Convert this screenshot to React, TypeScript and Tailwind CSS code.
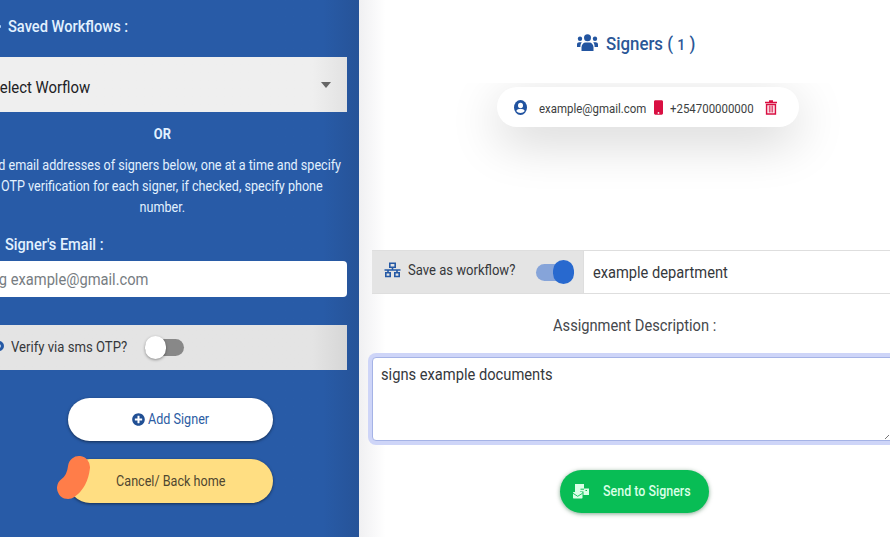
import React from "react";
import { FaMobile, FaPlusCircle } from "react-icons/fa";

function GroupIcon() {
  return (
    <svg width="21" height="17" viewBox="0 0 21 17" fill="#2355a0">
      <circle cx="10.500" cy="3.800" r="3.500" />
      <circle cx="3" cy="4.800" r="2.200" />
      <circle cx="18" cy="4.800" r="2.200" />
      <path d="M4.500 17v-3.500c0-3 2-5 4-5h4c2 0 4 2 4 5V17z" />
      <path d="M0 13v-2.500C0 9 1 8.300 2.300 8.300h2.500C3.800 9.500 3.400 11 3.400 13zM21 13v-2.500c0-1.500-1-2.200-2.300-2.200h-2.500c1 1.200 1.400 2.700 1.400 4.700z" />
    </svg>
  );
}

function AccountIcon() {
  return (
    <svg width="13" height="15" viewBox="0 0 26 30">
      <ellipse cx="13" cy="15" rx="13" ry="15" fill="#2153a0" />
      <ellipse cx="13" cy="11" rx="5" ry="5.500" fill="#fff" />
      <path d="M4.500 22C6 18.500 9 18 13 18s7 .500 8.500 4C19.500 24.500 16.500 26 13 26s-6.500-1.500-8.500-4z" fill="#fff" />
    </svg>
  );
}

function NetworkIcon() {
  return (
    <svg width="17" height="16" viewBox="0 0 17 16" fill="none" stroke="#2559a5" strokeWidth="1.600">
      <path d="M5.800 1.300h5.400v4H5.800zM1.800 10.700h4.400v3.800H1.800zM10.800 10.700h4.400v3.800h-4.400zM8.500 5.300V8M0.500 8h16M4 8v2.700M13 8v2.700" />
    </svg>
  );
}

function TrashIcon() {
  return (
    <svg width="12" height="15" viewBox="0 0 12 15" fill="none" stroke="#d90f42">
      <path d="M0 2.500h12M4 1h4" strokeWidth="1.700" />
      <path d="M1.600 4.500v9.600h8.800V4.500z" strokeWidth="1.500" />
      <path d="M4.300 5.500v7M6 5.500v7M7.700 5.500v7" strokeWidth="0.900" />
    </svg>
  );
}

function MailStackIcon() {
  return (
    <svg width="16" height="15" viewBox="0 0 16 15">
      <path d="M2 0h9v5H7v3H2z" fill="#d9ffe6" />
      <path d="M7 4.500h9v6.500h-5.500V7.500H7z" fill="#d9ffe6" />
      <path d="M7.500 5.200h3.500M12.500 6.500h1.500" stroke="#08bd55" />
      <rect y="8" width="9.500" height="6.500" rx="0.700" fill="#d9ffe6" />
      <path d="M0 9.300l4.700 3L9.500 9.300" stroke="#08bd55" fill="none" strokeWidth="0.900" />
    </svg>
  );
}

function SavedWorkflows() {
  return (
    <>
      <div className="flex h-[57px] items-center pb-1">
        <span className="-ml-px mr-[7px] h-[3px] w-[2px] rounded-full bg-[#a9cdf5]" />
        <span className="origin-left scale-x-[0.915] text-[16px] font-medium text-[#e2f1ff]">Saved Workflows :</span>
      </div>
      <div className="mr-[12.5px] flex h-[55px] items-center justify-between bg-gradient-to-r from-[#efefef] from-90% to-[#e2e2e2] pr-[15.5px] pt-[6px]">
        <span className="-ml-[9px] origin-left scale-x-[0.93] text-[16px] text-[#202124]">Select Worflow</span>
        <span className="mb-[5px] h-0 w-0 border-x-[5.5px] border-t-[6px] border-x-transparent border-t-[#666]" />
      </div>
    </>
  );
}

function SignerForm() {
  return (
    <>
      <p className="ml-[-22px] mr-3 h-[43px] pt-[10px] text-center text-[14px] font-bold leading-[24px] text-[#e2f1ff]">
        <span className="inline-block scale-x-[0.92]">OR</span>
      </p>
      <p className="ml-[-63px] mr-[-28px] h-[76px] text-center text-[14px] leading-[21px] text-[#e2f1ff]">
        <span className="inline-block scale-x-[0.9] whitespace-nowrap">Add email addresses of signers below, one at a time and specify</span>
        <br />
        <span className="inline-block scale-x-[0.9] whitespace-nowrap">OTP verification for each signer, if checked, specify phone</span>
        <br />
        <span className="inline-block scale-x-[0.9]">number.</span>
      </p>
      <div className="flex h-[30px] items-center pb-0.5 pl-[5px]">
        <span className="origin-left scale-x-[0.91] text-[16px] font-medium text-[#e2f1ff]">Signer's Email :</span>
      </div>
      <div className="mr-[12.5px] flex h-[36px] items-center rounded-r-[4px] bg-white pt-0.5">
        <span className="-ml-[9px] origin-left scale-x-[0.918] text-[16px] text-[#777d82]">eg example@gmail.com</span>
      </div>
      <div className="mr-[12.5px] mt-[28px] flex h-[45px] items-center bg-gradient-to-r from-[#e4e4e4] from-90% to-[#d6d6d6]">
        <span className="-ml-[6px] mb-1 h-[10px] w-[10px] rounded-full border-[3px] border-[#2559a5] bg-[#b9cce8]" />
        <span className="ml-[7px] w-[134px] origin-left scale-x-[0.905] text-[14.5px] text-[#35373a]">Verify via sms OTP?</span>
        <span className="flex h-[17px] w-[39px] items-center rounded-full bg-[#888]">
          <span className="h-[23px] w-[21px] shrink-0 rounded-full bg-white shadow-[0_1px_3px_rgba(0,0,0,0.4)]" />
        </span>
      </div>
    </>
  );
}

function ActionButtons() {
  return (
    <div className="ml-[68px] mt-[28px] flex w-[205px] flex-col gap-[18px]">
      <button className="flex h-[43px] items-center justify-center gap-[3px] rounded-full bg-white pl-[6px] text-[14px] text-[#2c5ca3] shadow-[0_1px_3px_rgba(0,0,0,0.5)]">
        <FaPlusCircle size={13} className="text-[#214f94]" />
        <span className="origin-left scale-x-[0.9]">Add Signer</span>
      </button>
      <div className="relative">
        <button className="flex h-[44px] w-full items-center justify-center rounded-full bg-[#ffde82] text-[14px] text-[#4f4630] shadow-[0_1px_3px_rgba(0,0,0,0.5)]">
          <span className="scale-x-[0.9]">Cancel/ Back home</span>
        </button>
        <svg className="absolute -left-[12px] -top-[4px]" width="36" height="48" viewBox="0 0 36 48" fill="none">
          <path d="M23 12C22 21 19 28 12 33" stroke="#ff7d49" strokeWidth="22" strokeLinecap="round" strokeLinejoin="round" />
        </svg>
      </div>
    </div>
  );
}

function SignerCard() {
  return (
    <div className="h-[167px] overflow-hidden pt-1">
      <div className="ml-[138px] flex h-[40px] w-[302px] items-center rounded-full bg-white pl-[17px] text-[13px] text-[#3d3f42] shadow-[0_14px_50px_rgba(0,0,0,0.18)]">
        <AccountIcon />
        <span className="ml-[12px] mt-[3px] w-[115px] origin-left scale-x-[0.88]">example@gmail.com</span>
        <FaMobile size={15} className="w-[9px] text-[#d90f42]" />
        <span className="ml-[7px] mt-[3px] w-[95px] origin-left scale-x-[0.88]">+254700000000</span>
        <TrashIcon />
      </div>
    </div>
  );
}

function WorkflowRow() {
  return (
    <div className="ml-[13px] flex h-[44px] border-y border-[#dedede] bg-white">
      <div className="flex w-[211px] items-center bg-[#e4e4e4] pl-[12px]">
        <span className="mb-[5px]">
          <NetworkIcon />
        </span>
        <span className="mb-[3px] ml-[7px] w-[128px] origin-left scale-x-[0.9] whitespace-nowrap text-[14.5px] text-[#35373a]">Save as workflow?</span>
        <span className="flex h-[17px] w-[38px] items-center justify-end rounded-full bg-[#86a4d9]">
          <span className="h-[24px] w-[21px] shrink-0 rounded-full bg-[#2869cf]" />
        </span>
      </div>
      <div className="flex flex-1 items-center border-l border-[#dedede] pl-[9px] pt-px">
        <span className="origin-left scale-x-[0.915] text-[16px] text-[#35383c]">example department</span>
      </div>
    </div>
  );
}

export default function App() {
  return (
    <div className="flex h-[537px] w-[890px] overflow-hidden bg-white font-['Roboto',sans-serif]">
      <aside className="w-[359px] shrink-0 overflow-hidden bg-gradient-to-r from-[#285ba7] from-90% to-[#265398]">
        <SavedWorkflows />
        <SignerForm />
        <ActionButtons />
      </aside>
      <main className="w-[531px] shrink-0 overflow-hidden bg-gradient-to-r from-[#f0f0f2] to-white to-[5%]">
        <h1 className="flex h-[83px] items-center pl-[218px] pt-1 text-[18px] font-medium text-[#2b5797]">
          <span className="pb-0.5">
            <GroupIcon />
          </span>
          <span className="ml-[8px] origin-left scale-x-[0.935]">
            Signers ( <span className="text-[15px]">1</span> )
          </span>
        </h1>
        <SignerCard />
        <WorkflowRow />
        <p className="flex h-[63px] items-center pl-[194px] text-[16px] text-[#45484c]">
          <span className="origin-left scale-x-[0.917]">Assignment Description :</span>
        </p>
        <div className="relative ml-[13px] mr-[-4px] h-[84px] rounded-[4px] border border-[#a5b3e6] bg-white pl-[8px] pt-[5px] text-[16px] text-[#35383c] shadow-[0_0_0_4px_#ced5f8]">
          <span className="inline-block origin-left scale-x-[0.918]">signs example documents</span>
          <svg className="absolute bottom-px right-[4px]" width="4" height="5" viewBox="0 0 4 5">
            <path d="M0 5L4 1" stroke="#777" />
          </svg>
        </div>
        <button className="ml-[201px] mt-[29px] flex h-[43px] w-[149px] items-center rounded-full bg-[#08bd55] pl-[13px] text-[14px] font-medium text-[#d9ffe6] shadow-[0_1px_4px_rgba(0,80,30,0.5)]">
          <MailStackIcon />
          <span className="ml-[14px] origin-left scale-x-[0.89]">Send to Signers</span>
        </button>
      </main>
    </div>
  );
}
